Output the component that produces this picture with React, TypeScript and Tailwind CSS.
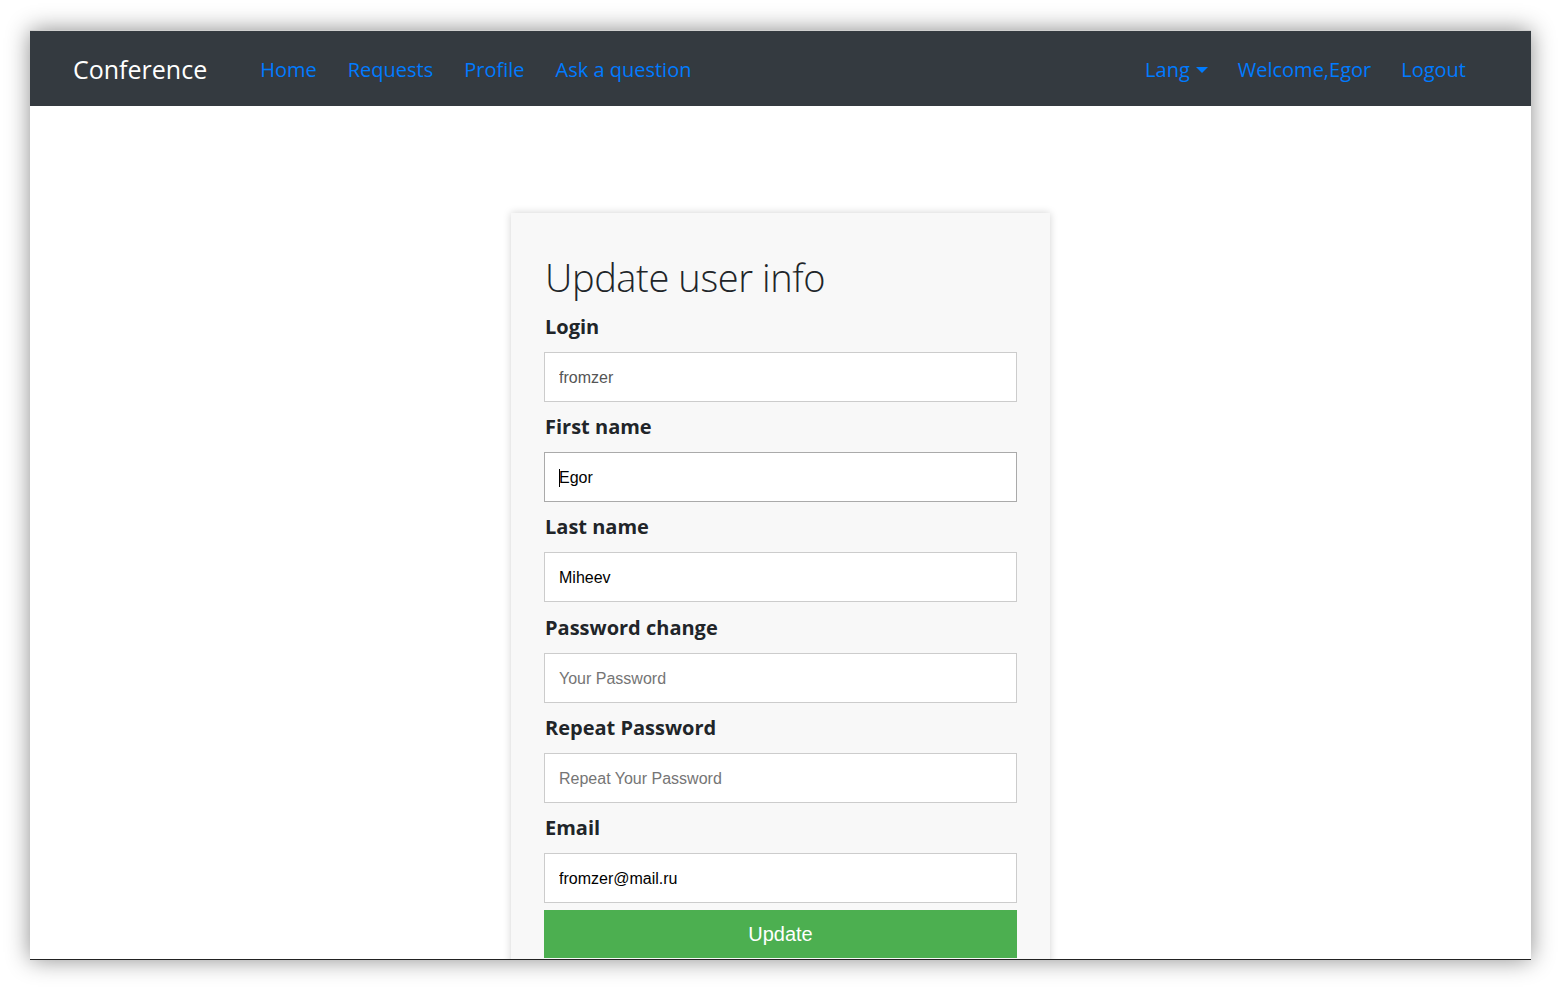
import React from "react";

const sego = "font-['Open_Sans','Noto_Sans',sans-serif]";
const arial = "font-['Liberation_Sans',Arial,sans-serif]";

const fields = [
  { label: "Login", value: "fromzer", tone: "text-[#555]" },
  { label: "First name", value: "Egor", tone: "text-black", focused: true },
  { label: "Last name", value: "Miheev", tone: "text-black" },
  { label: "Password change", placeholder: "Your Password", gap: true },
  { label: "Repeat Password", placeholder: "Repeat Your Password" },
  { label: "Email", value: "fromzer@mail.ru", tone: "text-black" },
];

const Field = ({ f }: { f: (typeof fields)[number] }) => (
  <div>
    <div className={`${f.gap ? "h-[51px]" : "h-[50px]"} flex items-center pl-px text-[20px] font-bold text-[#212529] ${sego}`}>
      {f.label}
    </div>
    <div className="relative">
      <input
        readOnly
        value={f.value ?? ""}
        placeholder={f.placeholder}
        className={`block w-full h-[50px] bg-white px-[14px] pt-px text-[16px] outline-none border ${arial} ${
          f.focused ? "border-[#aaa]" : "border-[#ccc]"
        } ${f.tone ?? ""} placeholder:text-[#757575]`}
      />
      {f.focused && <span className="absolute left-[15px] top-[17px] w-px h-[18px] bg-black" />}
    </div>
  </div>
);

export default function App() {
  return (
    <div className="w-[1562px] h-[990px] bg-white pt-[30px] pl-[30px]">
      <div className="w-[1501px] h-[930px] overflow-hidden bg-white border-t border-t-[#cfcfcf] border-b border-b-[#222] shadow-[0_0_22px_rgba(0,0,0,0.45)] flex flex-col">
        <nav className={`h-[75px] shrink-0 bg-[#343a40] flex items-center pt-[2px] pl-[43px] pr-[65px] ${sego}`}>
          <span className="text-[25px] text-white">Conference</span>
          <div className="ml-[53px] flex gap-[31px] text-[20px] text-[#007bff]">
            <a>Home</a>
            <a>Requests</a>
            <a>Profile</a>
            <a>Ask a question</a>
          </div>
          <div className="ml-auto flex items-center gap-[30px] text-[20px] text-[#007bff]">
            <a className="flex items-center gap-[6px]">
              Lang
              <span className="w-0 h-0 border-l-[6px] border-r-[6px] border-t-[6px] border-l-transparent border-r-transparent border-t-[#007bff]" />
            </a>
            <a>Welcome,Egor</a>
            <a>Logout</a>
          </div>
        </nav>
        <main className="flex justify-center pt-[107px]">
          <div className="w-[539px] bg-[#f8f8f8] shadow-[0_0_8px_rgba(0,0,0,0.18)] px-[33px] pt-[39px] pb-[20px]">
            <h1 className={`h-[50px] flex items-center pl-px text-[38px] tracking-[-0.4px] font-light text-[#212529] ${sego}`}>
              Update user info
            </h1>
            {fields.map((f) => (
              <Field key={f.label} f={f} />
            ))}
            <button className={`mt-[7px] w-full h-[48px] bg-[#4caf50] text-white text-[20px] ${arial}`}>Update</button>
          </div>
        </main>
      </div>
    </div>
  );
}
